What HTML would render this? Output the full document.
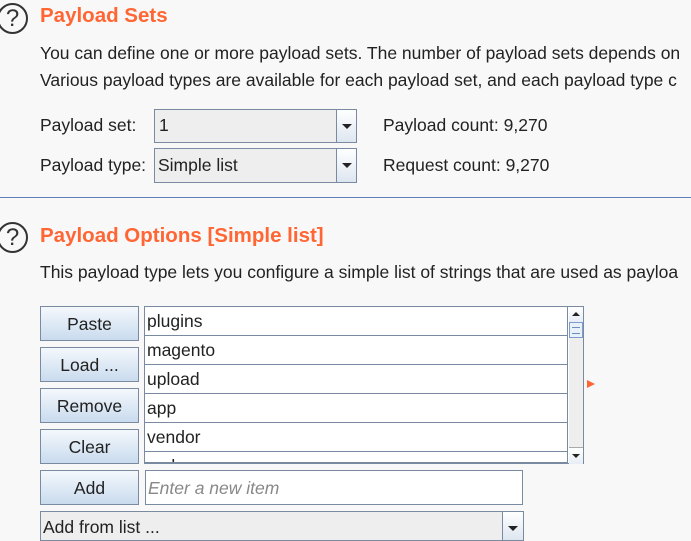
<!DOCTYPE html>
<html><head><style>
body{margin:0;width:691px;height:534px;overflow:hidden;background:#f8f8f8;font-family:"Liberation Sans",sans-serif;color:#222;position:relative}
.a{position:absolute;white-space:nowrap}
.q{position:absolute;width:27px;height:27px;border:2px solid #333;border-radius:50%;left:-3px;font-size:24px;line-height:28px;text-align:center;color:#333}
.t{position:absolute;left:40px;font-weight:bold;font-size:20.5px;color:#ff6633}
.p{font-size:17.5px}
.combo{position:absolute;border:1px solid #7a8aa0;background:#eee;box-sizing:border-box;font-size:17.5px}
.arr{position:absolute;right:0;top:0;bottom:0;width:19px;border-left:1px solid #7a8aa0;background:linear-gradient(#fff,#dde6f0)}
.arr:after{content:"";position:absolute;left:5px;top:14px;border:5px solid transparent;border-top:5px solid #222;border-bottom:0}
.btn{position:absolute;left:40px;width:99px;height:35px;box-sizing:border-box;border:1px solid #7a8aa0;background:linear-gradient(#f4f8fc,#c9dbee);font-size:17.5px;text-align:center;line-height:34px}
.row{position:absolute;left:145px;width:423px;height:29px;box-sizing:border-box;border-bottom:1px solid #7a8aa0;background:#fff;font-size:17.5px;padding-left:2px;line-height:28px}
</style></head><body>
<div class="q" style="top:3px">?</div>
<div class="t" style="top:4px">Payload Sets</div>
<div class="a p" style="left:40px;top:43px">You can define one or more payload sets. The number of payload sets depends on</div>
<div class="a p" style="left:40px;top:70px">Various payload types are available for each payload set, and each payload type c</div>
<div class="a p" style="left:40px;top:115px">Payload set:</div>
<div class="combo" style="left:154px;top:109px;width:203px;height:34px;padding:5px 0 0 4px">1<div class="arr"></div></div>
<div class="a p" style="left:40px;top:155px">Payload type:</div>
<div class="combo" style="left:154px;top:148px;width:203px;height:35px;padding:6px 0 0 3px">Simple list<div class="arr"></div></div>
<div class="a p" style="left:383px;top:115px">Payload count: 9,270</div>
<div class="a p" style="left:383px;top:155px">Request count: 9,270</div>
<div class="a" style="left:0;top:197px;width:691px;height:1px;background:#5f7fb8"></div>
<div class="q" style="top:222px">?</div>
<div class="t" style="top:224px">Payload Options [Simple list]</div>
<div class="a p" style="left:40px;top:262px">This payload type lets you configure a simple list of strings that are used as payloa</div>
<div class="btn" style="top:306px">Paste</div>
<div class="btn" style="top:347px">Load ...</div>
<div class="btn" style="top:388px">Remove</div>
<div class="btn" style="top:429px">Clear</div>
<div class="btn" style="top:470px">Add</div>
<div class="a" style="left:144px;top:306px;width:440px;height:158px;border:1px solid #7a8aa0;box-sizing:border-box;background:#fff;overflow:hidden"></div>
<div class="row" style="top:307px">plugins</div>
<div class="row" style="top:336px">magento</div>
<div class="row" style="top:365px">upload</div>
<div class="row" style="top:394px">app</div>
<div class="row" style="top:423px">vendor</div>
<div class="row" style="top:452px;height:11px;overflow:hidden">code</div>
<div class="a" style="left:567px;top:307px;width:1px;height:156px;background:#7a8aa0"></div>
<div class="a" style="left:569px;top:307px;width:14px;height:156px;background:#eee"></div>
<div class="a" style="left:569px;top:307px;width:14px;height:15px;background:linear-gradient(#fff,#e6edf5)"><div style="position:absolute;left:3px;top:5px;border:4px solid transparent;border-bottom:4px solid #222;border-top:0"></div></div>
<div class="a" style="left:569px;top:322px;width:12px;height:14px;border:1px solid #7f9cd0;background:#e8f0fa"><div style="margin:4px 2px;height:5px;border-top:1px solid #6f8dc0;border-bottom:1px solid #6f8dc0"></div></div>
<div class="a" style="left:569px;top:447px;width:14px;height:16px;border-top:1px solid #aaa;background:linear-gradient(#fff,#e6edf5)"><div style="position:absolute;left:3px;top:6px;border:4px solid transparent;border-top:4px solid #222;border-bottom:0"></div></div>
<div class="a" style="left:587px;top:380px;border:4px solid transparent;border-left:8px solid #ff6633;border-right:0"></div>
<div class="a" style="left:145px;top:470px;width:378px;height:35px;border:1px solid #7a8aa0;box-sizing:border-box;background:#fff;font-size:17.5px;font-style:italic;color:#888;padding:7px 0 0 2px">Enter a new item</div>
<div class="combo" style="left:40px;top:511px;width:484px;height:30px;padding:5px 0 0 2px">Add from list ...<div class="arr" style="width:20px"></div></div>
</body></html>
